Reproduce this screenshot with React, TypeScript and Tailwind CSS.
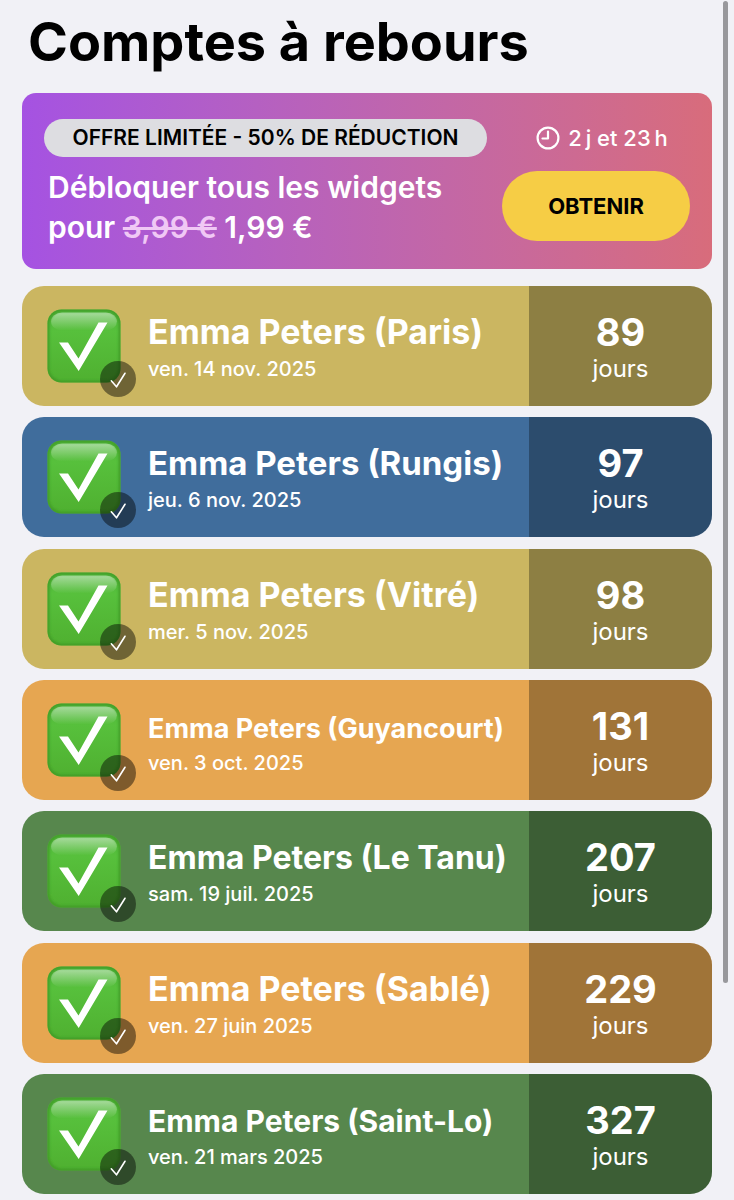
import React from "react";

type Tone = "gold" | "blue" | "orange" | "green";

interface Countdown {
  name: string;
  date: string;
  iso: string;
  days: number;
  tone: Tone;
  size: string;
}

const tones: Record<Tone, string> = {
  gold: "bg-[#cbb661]",
  blue: "bg-[#406d9c]",
  orange: "bg-[#e6a651]",
  green: "bg-[#57874d]",
};

const countdowns: Countdown[] = [
  { name: "Emma Peters (Paris)", date: "ven. 14 nov. 2025", iso: "2025-11-14", days: 89, tone: "gold", size: "text-[34px]" },
  { name: "Emma Peters (Rungis)", date: "jeu. 6 nov. 2025", iso: "2025-11-06", days: 97, tone: "blue", size: "text-[33px]" },
  { name: "Emma Peters (Vitré)", date: "mer. 5 nov. 2025", iso: "2025-11-05", days: 98, tone: "gold", size: "text-[34px]" },
  { name: "Emma Peters (Guyancourt)", date: "ven. 3 oct. 2025", iso: "2025-10-03", days: 131, tone: "orange", size: "text-[27px]" },
  { name: "Emma Peters (Le Tanu)", date: "sam. 19 juil. 2025", iso: "2025-07-19", days: 207, tone: "green", size: "text-[32px]" },
  { name: "Emma Peters (Sablé)", date: "ven. 27 juin 2025", iso: "2025-06-27", days: 229, tone: "orange", size: "text-[34px]" },
  { name: "Emma Peters (Saint-Lo)", date: "ven. 21 mars 2025", iso: "2025-03-21", days: 327, tone: "green", size: "text-[30px]" },
];

function CheckTile() {
  return (
    <svg viewBox="0 0 74 74" className="size-[74px]" aria-hidden="true">
      <defs>
        <linearGradient id="tile-face" x1="0" y1="0" x2="0" y2="1">
          <stop offset="0" stopColor="#4fb53a" />
          <stop offset="0.3" stopColor="#57c03c" />
          <stop offset="1" stopColor="#4fb030" />
        </linearGradient>
        <linearGradient id="tile-shine" x1="0" y1="0" x2="0" y2="1">
          <stop offset="0" stopColor="#fff" stopOpacity="0.5" />
          <stop offset="1" stopColor="#fff" stopOpacity="0" />
        </linearGradient>
        <filter id="tile-soft" x="-10%" y="-10%" width="120%" height="120%">
          <feGaussianBlur stdDeviation="0.9" />
        </filter>
        <clipPath id="tile-clip">
          <rect x="0.5" y="0.5" width="73" height="73" rx="14" />
        </clipPath>
      </defs>
      <g clipPath="url(#tile-clip)">
        <rect width="74" height="74" fill="url(#tile-face)" />
        <rect x="4" y="3.5" width="66" height="18" rx="11" fill="url(#tile-shine)" />
        <rect x="1" y="1" width="72" height="72" rx="14" fill="none" stroke="#3f9a26" strokeWidth="3" strokeOpacity="0.85" filter="url(#tile-soft)" />
      </g>
      <path d="M12 33.5H21L31.5 49.5L51.5 13.5H60.5L31.7 62Z" fill="#fff" />
    </svg>
  );
}

function CheckBadge() {
  return (
    <span className="absolute -right-[15px] -bottom-[14px] flex size-9 items-center justify-center rounded-full bg-black/45">
      <svg viewBox="0 0 36 36" className="size-9" fill="none" stroke="#fff" strokeWidth="1.6" strokeLinecap="round" strokeLinejoin="round" aria-hidden="true">
        <path d="M11.3 19.8L16.5 25.8L25 12.3" />
      </svg>
    </span>
  );
}

function CountdownRow({ item }: { item: Countdown }) {
  return (
    <li className={`flex h-[120px] overflow-hidden rounded-[22px] text-white ${tones[item.tone]}`}>
      <div className="flex min-w-0 flex-1 items-center pl-[25px]">
        <div className="relative shrink-0">
          <CheckTile />
          <CheckBadge />
        </div>
        <div className="min-w-0 pt-[2px] pl-[27px]">
          <h2 className="text-[34px] leading-[44px] font-bold whitespace-nowrap">
            <span className={`leading-none ${item.size}`}>{item.name}</span>
          </h2>
          <time dateTime={item.iso} className="block text-[20px] leading-[30px] font-medium">
            {item.date}
          </time>
        </div>
      </div>
      <div className="flex w-[183px] shrink-0 flex-col items-center justify-center bg-black/30 pt-[2px]">
        <span className="text-[38px] leading-[44px] font-bold">{item.days}</span>
        <span className="text-[24px] leading-[30px]">jours</span>
      </div>
    </li>
  );
}

function ClockIcon() {
  return (
    <svg viewBox="0 0 24 24" className="size-6" fill="none" stroke="#fff" strokeWidth="2.2" strokeLinecap="round" strokeLinejoin="round" aria-hidden="true">
      <circle cx="12" cy="12" r="10.4" />
      <path d="M12 5.5V12.5H6.5" />
    </svg>
  );
}

function OfferBanner() {
  return (
    <section className="flex h-44 justify-between rounded-[14px] bg-linear-to-r from-[#a552e2] to-[#d86c7b] px-[22px] text-white">
      <div className="pt-[26px]">
        <p className="flex h-[38px] w-[443px] items-center justify-center rounded-full bg-[#dddde1] text-[21px] font-semibold text-black">
          OFFRE LIMITÉE - 50% DE RÉDUCTION
        </p>
        <p className="pt-[10px] pl-1 text-[30px] leading-10 font-semibold">
          Débloquer tous les widgets
          <br />
          pour <s className="text-[#f0c8f5] decoration-3">3,99 €</s> 1,99 €
        </p>
      </div>
      <div className="flex w-[188px] flex-col items-center pt-[30px]">
        <p className="flex h-[30px] items-center gap-2 pl-3 text-[22px] font-medium">
          <ClockIcon />
          <span>{"2\u2009j et 23\u2009h"}</span>
        </p>
        <button type="button" className="mt-[18px] h-[70px] w-full rounded-full bg-[#f6cd45] text-[22px] font-bold text-black">
          OBTENIR
        </button>
      </div>
    </section>
  );
}

export default function App() {
  return (
    <main className="relative flex min-h-screen flex-col bg-[#f1f1f6] px-[22px] pb-[6px] font-['Inter',sans-serif]">
      <h1 className="pt-3 pl-[6px] text-[54px] leading-[60px] font-bold text-black">Comptes à rebours</h1>
      <div className="pt-[21px]">
        <OfferBanner />
      </div>
      <ul className="mt-[17px] flex flex-1 flex-col justify-between gap-[11px]">
        {countdowns.map((item) => (
          <CountdownRow key={item.name} item={item} />
        ))}
      </ul>
      <div className="absolute top-px right-[6px] h-[982px] w-[5px] rounded-full bg-[#98989c]" aria-hidden="true" />
    </main>
  );
}
